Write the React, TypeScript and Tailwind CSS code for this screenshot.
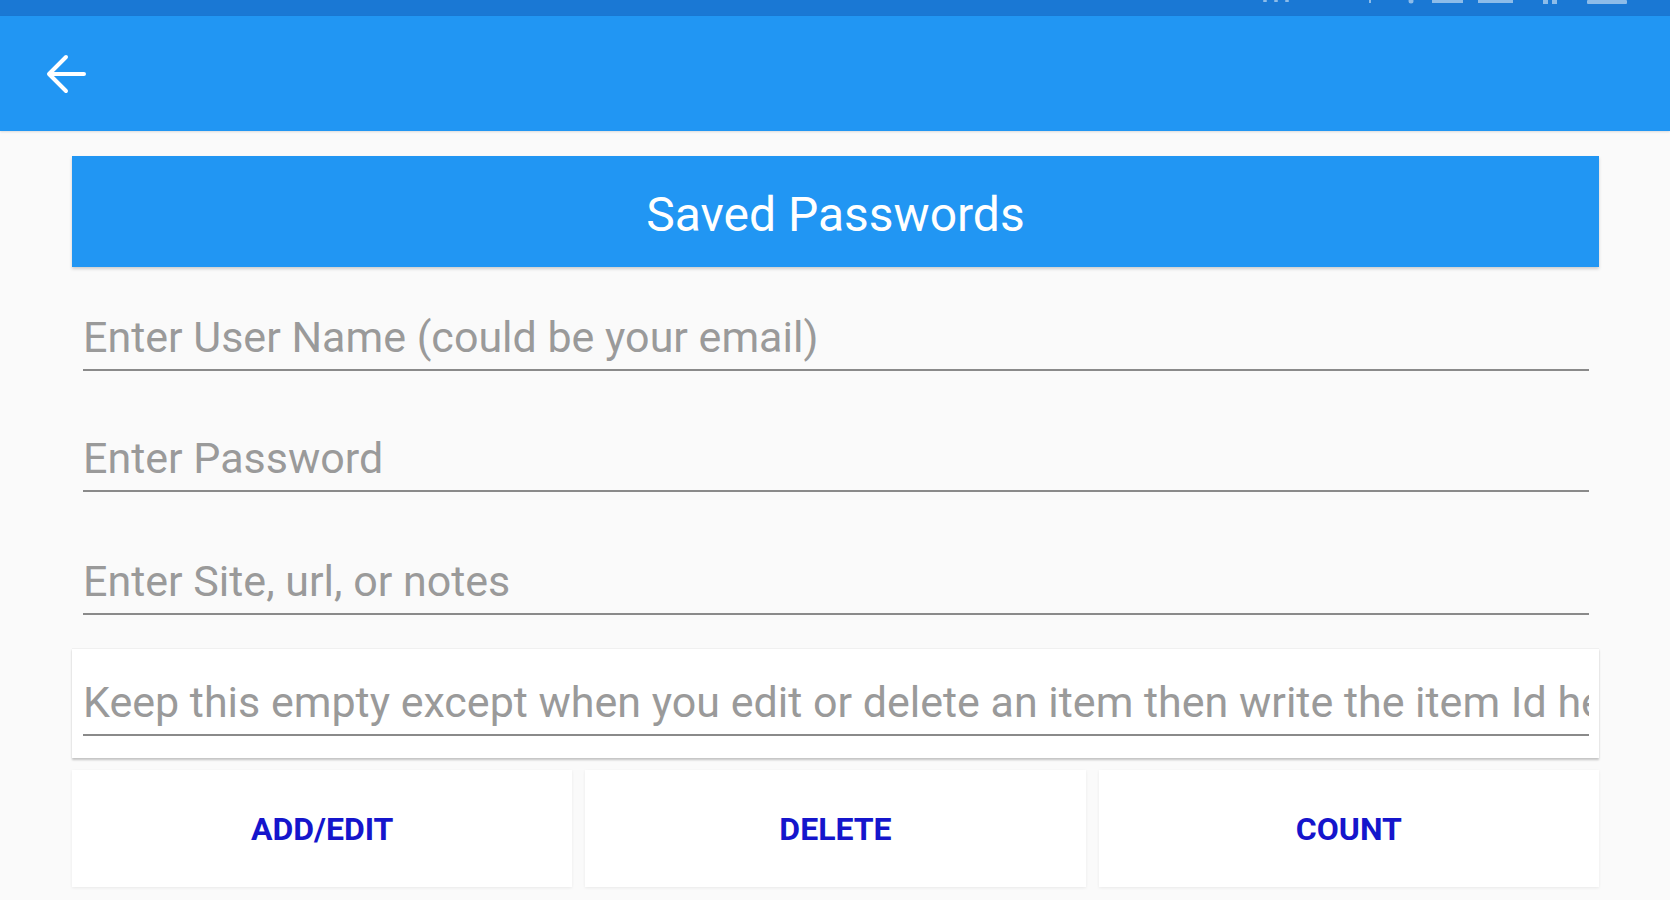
import { useState } from "react";

const fieldClass =
  "block w-full h-[58px] pb-[8px] bg-transparent border-b-2 border-[#8a8a8a] text-[43px] leading-[48px] text-[#444] placeholder:text-[#9a9a9a] outline-none";

function StatusIcons() {
  // only the bottom edge of the status bar icons is visible in the shot
  return (
    <svg className="ml-auto mr-[20px]" width="400" height="16" viewBox="0 0 400 16">
      <g fill="#ffffff" opacity="0.5">
        <rect x="13" y="0" width="4" height="2" rx="1" />
        <rect x="24" y="0" width="4" height="2" rx="1" />
        <rect x="35" y="0" width="4" height="2" rx="1" />
        <rect x="119" y="0" width="2" height="3" />
        <circle cx="161" cy="1" r="2.5" />
        <rect x="182" y="0" width="31" height="3" />
        <rect x="228" y="0" width="35" height="3" />
        <rect x="293" y="0" width="5" height="4" />
        <rect x="302" y="0" width="5" height="4" />
        <rect x="337" y="0" width="40" height="4" rx="1" />
      </g>
    </svg>
  );
}

function BackArrow() {
  return (
    <svg width="40" height="40" viewBox="0 0 40 40" fill="none">
      <path
        d="M38 20H4M20 3L3 20l17 17"
        stroke="#ffffff"
        strokeWidth="4"
        strokeLinecap="round"
        strokeLinejoin="round"
      />
    </svg>
  );
}

export default function App() {
  const [userName, setUserName] = useState("");
  const [password, setPassword] = useState("");
  const [site, setSite] = useState("");
  const [itemId, setItemId] = useState("");

  return (
    <div
      className="w-[1670px] h-[900px] overflow-hidden bg-[#fafafa]"
      style={{ fontFamily: "Roboto, 'Noto Sans', 'Liberation Sans', sans-serif" }}
    >
      {/* status bar */}
      <div className="h-[16px] bg-[#1a78d4] flex items-start">
        <StatusIcons />
      </div>

      {/* toolbar */}
      <div className="h-[115px] bg-[#2196f3] flex items-center pl-[46px] shadow-[0_1px_2px_rgba(0,0,0,0.12)]">
        <button className="flex items-center">
          <BackArrow />
        </button>
      </div>

      <div className="pl-[72px] pr-[71px] pt-[25px]">
        <div className="h-[111px] bg-[#2196f3] flex items-center justify-center pt-[6px] text-white text-[48px] leading-none shadow-[0_2px_3px_rgba(0,0,0,0.18)]">
          Saved Passwords
        </div>

        <div className="pl-[11px] pr-[10px]">
          <input
            className={`${fieldClass} mt-[46px]`}
            placeholder="Enter User Name (could be your email)"
            value={userName}
            onChange={(e) => setUserName(e.target.value)}
          />
          <input
            className={`${fieldClass} mt-[63px]`}
            placeholder="Enter Password"
            value={password}
            onChange={(e) => setPassword(e.target.value)}
          />
          <input
            className={`${fieldClass} mt-[65px]`}
            placeholder="Enter Site, url, or notes"
            value={site}
            onChange={(e) => setSite(e.target.value)}
          />
        </div>

        <div className="mt-[33px] bg-white border-t border-[#f0f0f0] pt-[29px] pb-[22px] pl-[11px] pr-[10px] shadow-[0_2px_2px_rgba(0,0,0,0.22)]">
          <input
            className={fieldClass}
            placeholder="Keep this empty except when you edit or delete an item then write the item Id here"
            value={itemId}
            onChange={(e) => setItemId(e.target.value)}
          />
        </div>

        <div className="mt-[12px] flex gap-[13px]">
          {["ADD/EDIT", "DELETE", "COUNT"].map((label) => (
            <button
              key={label}
              className="flex-1 h-[117px] bg-white flex items-center justify-center text-[32px] font-bold text-[#1515cc] shadow-[0_1px_3px_rgba(0,0,0,0.07)]"
            >
              {label}
            </button>
          ))}
        </div>
      </div>
    </div>
  );
}
